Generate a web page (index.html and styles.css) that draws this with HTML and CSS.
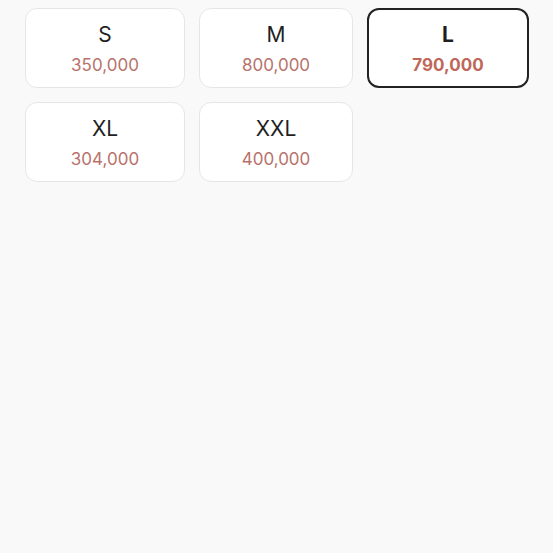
FILE: index.html
```html
<!DOCTYPE html>
<html lang="en">
<head>
    <meta charset="UTF-8">
    <meta name="viewport" content="width=device-width, initial-scale=1.0">
    <title>Sizes</title>
    <link rel="stylesheet" href="styles.css">
</head>
<body>
    <div class="size-grid">
        <button type="button" class="size-option">
            <span class="size-name">S</span>
            <span class="size-price">350,000</span>
        </button>
        <button type="button" class="size-option">
            <span class="size-name">M</span>
            <span class="size-price">800,000</span>
        </button>
        <button type="button" class="size-option selected">
            <span class="size-name">L</span>
            <span class="size-price">790,000</span>
        </button>
        <button type="button" class="size-option">
            <span class="size-name">XL</span>
            <span class="size-price">304,000</span>
        </button>
        <button type="button" class="size-option">
            <span class="size-name">XXL</span>
            <span class="size-price">400,000</span>
        </button>
    </div>
</body>
</html>
```
FILE: styles.css
```css
body {
    margin: 0;
    background-color: #f9f9f9;
    font-family: Inter, "Noto Sans", sans-serif;
}
.size-grid {
    display: grid;
    grid-template-columns: 160px 154px 162px;
    column-gap: 14px;
    row-gap: 14px;
    padding: 8px 0 0 25px;
}
.size-option {
    display: flex;
    flex-direction: column;
    align-items: center;
    box-sizing: border-box;
    height: 80px;
    padding: 12px 8px 0;
    background-color: #fff;
    border: 1px solid #e6e6e6;
    border-radius: 12px;
    font-family: inherit;
    cursor: pointer;
}
.size-name {
    font-size: 21px;
    line-height: 28px;
    color: #1f1f1f;
}
.size-price {
    margin-top: 4px;
    font-size: 17px;
    line-height: 24px;
    color: #b8726b;
}
.size-option.selected {
    padding-top: 11px;
    border: 2px solid #222;
}
.selected .size-name,
.selected .size-price {
    font-weight: 700;
}
.selected .size-price {
    color: #c0675c;
}
```
